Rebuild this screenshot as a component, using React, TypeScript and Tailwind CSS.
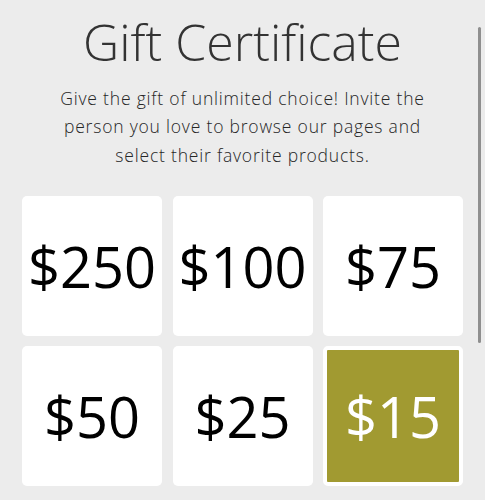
import React from "react";

const amounts = ["$250", "$100", "$75", "$50", "$25", "$15"];

export default function App() {
  const selected = "$15";
  return (
    <div
      className="relative min-h-[500px] w-full overflow-hidden bg-[#ececec] text-[#333]"
      style={{ fontFamily: '"Open Sans", "Liberation Sans", sans-serif' }}
    >
      {/* overlay scrollbar thumb */}
      <div className="absolute right-[4px] top-[27px] h-[316px] w-[3px] rounded-full bg-[#8f8f8f]" />

      <div className="flex flex-col items-center pt-[8px]">
        <h1 className="text-[50px] font-light leading-[68px] text-[#333]">Gift Certificate</h1>
        <p className="mt-[7.5px] w-[380px] text-center text-[17.5px] font-light leading-[28.5px] tracking-[0.8px] text-[#262626]">
          Give the gift of unlimited choice! Invite the person you love to browse our pages and select their
          favorite products.
        </p>
      </div>

      <div className="mt-[27px] grid grid-cols-3 gap-x-[10.5px] gap-y-[10px] px-[22px]">
        {amounts.map((a) => {
          const isSel = a === selected;
          return (
            <div
              key={a}
              className={
                isSel
                  ? "flex h-[140px] items-center justify-center rounded-[5px] border-[4px] border-white bg-[#a19a31] text-white"
                  : "flex h-[140px] items-center justify-center rounded-[5px] bg-white text-black"
              }
            >
              <span className="text-[56px] leading-none">{a}</span>
            </div>
          );
        })}
      </div>
    </div>
  );
}
